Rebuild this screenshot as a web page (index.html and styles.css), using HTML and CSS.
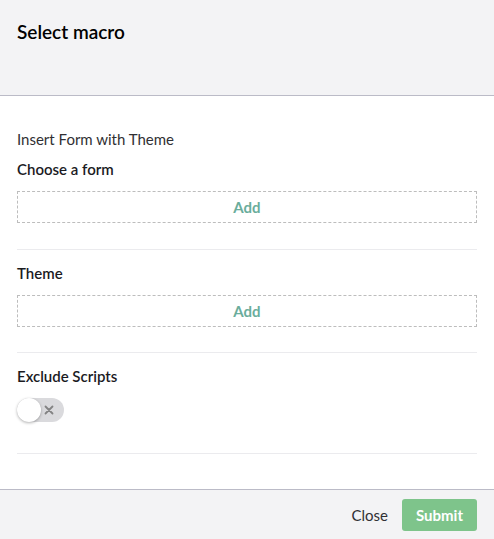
FILE: index.html
```html
<!DOCTYPE html>
<html>
<head>
<meta charset="utf-8">
<link rel="stylesheet" href="styles.css">
</head>
<body>
<div class="dialog">
  <header class="head">
    <h1 class="title">Select macro</h1>
  </header>
  <main class="content">
    <div class="macro-name">Insert Form with Theme</div>
    <section class="prop">
      <label class="prop-label">Choose a form</label>
      <button class="add-box">Add</button>
    </section>
    <section class="prop">
      <label class="prop-label">Theme</label>
      <button class="add-box">Add</button>
    </section>
    <section class="prop">
      <label class="prop-label">Exclude Scripts</label>
      <div class="toggle">
        <span class="knob"></span>
        <svg class="x" width="10" height="10" viewBox="0 0 10 10"><path d="M1.5 1.5L8.5 8.5M8.5 1.5L1.5 8.5" stroke="#838383" stroke-width="1.8" stroke-linecap="round"/></svg>
      </div>
    </section>
  </main>
  <footer class="foot">
    <button class="btn-close">Close</button>
    <button class="btn-submit">Submit</button>
  </footer>
</div>
</body>
</html>
```
FILE: styles.css
```css
html, body {
  margin: 0;
  padding: 0;
  height: 100%;
}
body {
  font-family: Lato, "Open Sans", sans-serif;
  color: #1b264f;
  background: #fff;
}
.dialog {
  display: flex;
  flex-direction: column;
  height: 539px;
}
.head {
  background: #f3f3f5;
  height: 96px;
  border-bottom: 1px solid #bbbbc7;
  box-sizing: border-box;
  padding: 20px 17px 0;
}
.title {
  margin: 0;
  font-size: 19px;
  font-weight: 600;
  color: #000;
  line-height: 24px;
}
.content {
  flex: 1;
  padding: 33px 17px 0;
  color: #000;
}
.macro-name {
  font-size: 15px;
  line-height: 20px;
  color: #303033;
}
.prop {
  border-bottom: 1px solid #ebebee;
  padding-bottom: 25px;
  margin-bottom: 13px;
}
.prop:first-of-type {
  padding-top: 10px;
  padding-bottom: 26px;
}
.prop-label {
  display: block;
  font-size: 15px;
  font-weight: 600;
  line-height: 20px;
  color: #1b1b1f;
  margin-bottom: 12px;
}
.add-box {
  display: block;
  width: 100%;
  height: 32px;
  border: 1px dashed #bdbdbd;
  background: #fff;
  font-family: inherit;
  font-size: 15px;
  font-weight: 700;
  color: #6aad9c;
  padding: 0;
  cursor: pointer;
}
.toggle {
  position: relative;
  width: 47px;
  height: 24px;
  border-radius: 12px;
  background: #dadadd;
  margin-bottom: 6px;
}
.knob {
  position: absolute;
  left: 0;
  top: 0;
  width: 24px;
  height: 24px;
  border-radius: 50%;
  background: #fff;
  box-shadow: 0 1px 3px rgba(0,0,0,0.3);
}
.x {
  position: absolute;
  right: 10px;
  top: 7px;
}
.foot {
  background: #f3f3f5;
  border-top: 1px solid #bbbbc7;
  height: 50px;
  box-sizing: border-box;
  display: flex;
  align-items: center;
  justify-content: flex-end;
  padding: 1px 17px 0 0;
  gap: 6px;
}
.btn-close {
  background: none;
  border: none;
  font-family: inherit;
  font-size: 15px;
  color: #303033;
  padding: 0 8px;
  height: 32px;
}
.btn-submit {
  background: #7ec48b;
  border: none;
  border-radius: 3px;
  color: #fff;
  font-family: inherit;
  font-size: 15px;
  font-weight: 700;
  width: 75px;
  height: 32px;
  padding: 0;
}
```
